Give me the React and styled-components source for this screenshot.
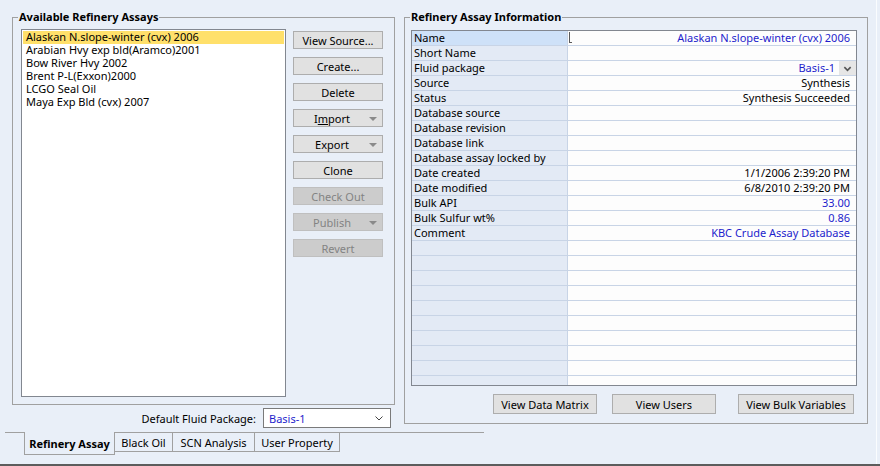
import React from 'react';
import styled, { createGlobalStyle } from 'styled-components';

const Global = createGlobalStyle`
  html, body { margin: 0; padding: 0; }
  body {
    font-family: "Noto Sans", "Open Sans", sans-serif;
    font-size: 11px;
    color: #000;
  }
`;

const BG = '#E9EFF8';
const BLUE = '#1E1ECC';

const Root = styled.div`
  width: 880px;
  height: 466px;
  box-sizing: border-box;
  background: ${BG};
  border-bottom: 2px solid #5C5C5C;
  display: flex;
  overflow: hidden;
`;

const Main = styled.div`
  width: 876px;
  display: flex;
  flex-direction: column;
`;

const EdgeLine = styled.div`
  width: 1px;
  background: #FAFCFE;
`;

const TopArea = styled.div`
  display: flex;
  align-items: flex-start;
  padding: 10px 0 0 12px;
  height: 418px;
`;

const LeftColumn = styled.div`
  display: flex;
  flex-direction: column;
  width: 383px;
`;

const Group = styled.fieldset`
  margin: 0 0 0 ${p => p.$ml || 0}px;
  padding: 0;
  border: 1px solid #A0A0A0;
  box-sizing: border-box;
  min-width: 0;
  width: ${p => p.$w}px;
  height: ${p => p.$h}px;
  display: flex;
  flex-direction: column;
`;

const Legend = styled.legend`
  margin-left: 5px;
  padding: 0 1px 1px;
  font-weight: bold;
  line-height: 14px;
  height: 15px;
  box-sizing: border-box;
`;

const AssayBody = styled.div`
  display: flex;
  gap: 7px;
  padding: 4px 11px 0 8px;
`;

const ListBox = styled.div`
  width: 265px;
  height: 368px;
  box-sizing: border-box;
  border: 1px solid #828790;
  background: #fff;
  padding: 1px;
`;

const ListItem = styled.div`
  height: 13px;
  box-sizing: border-box;
  line-height: 12px;
  padding: 0 0 1px 3px;
  white-space: nowrap;
  background: ${p => (p.$selected ? '#FFE06B' : 'transparent')};
`;

const ButtonColumn = styled.div`
  display: flex;
  flex-direction: column;
  gap: 8px;
  padding-top: 2px;
`;

const Btn = styled.button`
  font: inherit;
  width: ${p => p.$w || 90}px;
  height: ${p => p.$h || 18}px;
  box-sizing: border-box;
  border: 1px solid ${p => (p.disabled ? '#BFBFBF' : '#ADADAD')};
  background: ${p => (p.disabled ? '#CCCCCC' : '#E1E1E1')};
  color: ${p => (p.disabled ? '#838383' : '#000')};
  margin: 0 0 0 ${p => p.$ml || 0}px;
  padding: 1px ${p => (p.$menu ? 12 : 0)}px 0 0;
  display: flex;
  align-items: center;
  justify-content: center;
  position: relative;
  line-height: 14px;
  cursor: default;
`;

const MenuArrow = styled.span`
  position: absolute;
  right: 5px;
  top: 7px;
  width: 0;
  height: 0;
  border-left: 4px solid transparent;
  border-right: 4px solid transparent;
  border-top: 4px solid #8A8A8A;
`;

const FluidRow = styled.div`
  display: flex;
  align-items: center;
  justify-content: flex-end;
  gap: 7px;
  margin: 3px 4px 0 0;
`;

const Combo = styled.div`
  width: 128px;
  height: 20px;
  box-sizing: border-box;
  border: 1px solid #7A7A7A;
  background: #fff;
  display: flex;
  align-items: center;
  padding: 0 6px 0 5px;
  color: ${BLUE};
  justify-content: space-between;
`;

const InfoBody = styled.div`
  display: flex;
  flex-direction: column;
  padding: 5px 10px 0 6px;
`;

const Grid = styled.div`
  height: 356px;
  box-sizing: border-box;
  border: 1px solid #828790;
  background: #fff;
  overflow: hidden;
`;

const Row = styled.div`
  display: flex;
  height: 15px;
  box-sizing: border-box;
  border-bottom: 1px solid #C8D4E6;
`;

const LabelCell = styled.div`
  width: 156px;
  box-sizing: border-box;
  border-right: 1px solid #C8D4E6;
  background: ${p => (p.$active ? '#CEE1F8' : '#E3EAF5')};
  padding-left: 2px;
  line-height: 13px;
  white-space: nowrap;
`;

const ValueCell = styled.div`
  flex: 1;
  display: flex;
  align-items: flex-start;
  justify-content: flex-end;
  padding-right: ${p => (p.$dropdown ? 0 : 6)}px;
  color: ${p => (p.$blue ? BLUE : '#000')};
  line-height: 13px;
  white-space: nowrap;
  background: #FDFDFD;
`;

const Caret = styled.span`
  width: 2px;
  height: 10px;
  margin: 1px auto 0 1px;
  border-left: 1px solid #5A5A5A;
  border-bottom: 1px solid #5A5A5A;
`;

const DropBox = styled.span`
  width: 17px;
  height: 14px;
  margin-left: 4px;
  background: #E6E6E6;
  display: flex;
  align-items: center;
  justify-content: center;
`;

const GridButtons = styled.div`
  display: flex;
  justify-content: flex-end;
  padding-right: 3px;
  margin-top: 8px;
`;

const TabStrip = styled.div`
  margin: 4px 0 0 5px;
  width: 479px;
  border-top: 1px solid #A0A0A0;
  display: flex;
  align-items: flex-start;
  padding-left: 19px;
  box-sizing: border-box;
`;

const Tab = styled.div`
  width: ${p => p.$w}px;
  box-sizing: border-box;
  height: ${p => (p.$active ? 23 : 19)}px;
  margin-top: ${p => (p.$active ? -1 : 0)}px;
  border-right: 1px solid #A0A0A0;
  border-bottom: 1px solid #A0A0A0;
  border-left: ${p => (p.$active ? '1px solid #A0A0A0' : 'none')};
  background: ${BG};
  font-weight: ${p => (p.$active ? 'bold' : 'normal')};
  display: flex;
  align-items: center;
  justify-content: center;
  padding-top: ${p => (p.$active ? 1 : 0)}px;
  white-space: nowrap;
`;

const Chevron = ({ size = 10, color = '#555', w = 1.3 }) => (
  <svg width={size} height={size} viewBox="0 0 10 10">
    <polyline points="1.5,3.5 5,7 8.5,3.5" fill="none" stroke={color} strokeWidth={w} />
  </svg>
);

const assays = [
  'Alaskan N.slope-winter (cvx) 2006',
  'Arabian Hvy exp bld(Aramco)2001',
  'Bow River Hvy 2002',
  'Brent P-L(Exxon)2000',
  'LCGO Seal Oil',
  'Maya Exp Bld (cvx) 2007',
];

const rows = [
  { label: 'Name', value: 'Alaskan N.slope-winter (cvx) 2006', blue: true, active: true },
  { label: 'Short Name' },
  { label: 'Fluid package', value: 'Basis-1', blue: true, dropdown: true },
  { label: 'Source', value: 'Synthesis' },
  { label: 'Status', value: 'Synthesis Succeeded' },
  { label: 'Database source' },
  { label: 'Database revision' },
  { label: 'Database link' },
  { label: 'Database assay locked by' },
  { label: 'Date created', value: '1/1/2006 2:39:20 PM' },
  { label: 'Date modified', value: '6/8/2010 2:39:20 PM' },
  { label: 'Bulk API', value: '33.00', blue: true },
  { label: 'Bulk Sulfur wt%', value: '0.86', blue: true },
  { label: 'Comment', value: 'KBC Crude Assay Database', blue: true },
];
while (rows.length < 24) rows.push({ label: '' });

const buttons = [
  { t: 'View Source...' },
  { t: 'Create...' },
  { t: 'Delete' },
  { t: <><span>I</span><u>m</u><span>port</span></>, menu: true },
  { t: 'Export', menu: true },
  { t: 'Clone' },
  { t: 'Check Out', disabled: true },
  { t: 'Publish', menu: true, disabled: true },
  { t: 'Revert', disabled: true },
];

export default function App() {
  return (
    <Root>
      <Global />
      <Main>
        <TopArea>
          <LeftColumn>
            <Group $w={383} $h={395}>
              <Legend>Available Refinery Assays</Legend>
              <AssayBody>
                <ListBox>
                  {assays.map((a, i) => (
                    <ListItem key={a} $selected={i === 0}>{a}</ListItem>
                  ))}
                </ListBox>
                <ButtonColumn>
                  {buttons.map((b, i) => (
                    <Btn key={i} disabled={b.disabled} $menu={b.menu}>
                      {b.t}
                      {b.menu && <MenuArrow />}
                    </Btn>
                  ))}
                </ButtonColumn>
              </AssayBody>
            </Group>
            <FluidRow>
              <span>Default Fluid Package:</span>
              <Combo>
                <span>Basis-1</span>
                <Chevron size={10} color="#444" w={1} />
              </Combo>
            </FluidRow>
          </LeftColumn>
          <Group $w={464} $h={414} $ml={9}>
            <Legend>Refinery Assay Information</Legend>
            <InfoBody>
              <Grid>
                {rows.map((r, i) => (
                  <Row key={i}>
                    <LabelCell $active={r.active}>{r.label}</LabelCell>
                    <ValueCell $blue={r.blue} $dropdown={r.dropdown}>
                      {r.active && <Caret />}
                      {r.value}
                      {r.dropdown && (
                        <DropBox>
                          <Chevron size={9} color="#555" w={1.8} />
                        </DropBox>
                      )}
                    </ValueCell>
                  </Row>
                ))}
              </Grid>
              <GridButtons>
                <Btn $w={104} $h={20}>View Data Matrix</Btn>
                <Btn $w={104} $h={20} $ml={15}>View Users</Btn>
                <Btn $w={116} $h={20} $ml={22}>View Bulk Variables</Btn>
              </GridButtons>
            </InfoBody>
          </Group>
        </TopArea>
        <TabStrip>
          <Tab $active $w={91}>Refinery Assay</Tab>
          <Tab $w={58}>Black Oil</Tab>
          <Tab $w={82}>SCN Analysis</Tab>
          <Tab $w={85}>User Property</Tab>
        </TabStrip>
      </Main>
      <EdgeLine />
    </Root>
  );
}
